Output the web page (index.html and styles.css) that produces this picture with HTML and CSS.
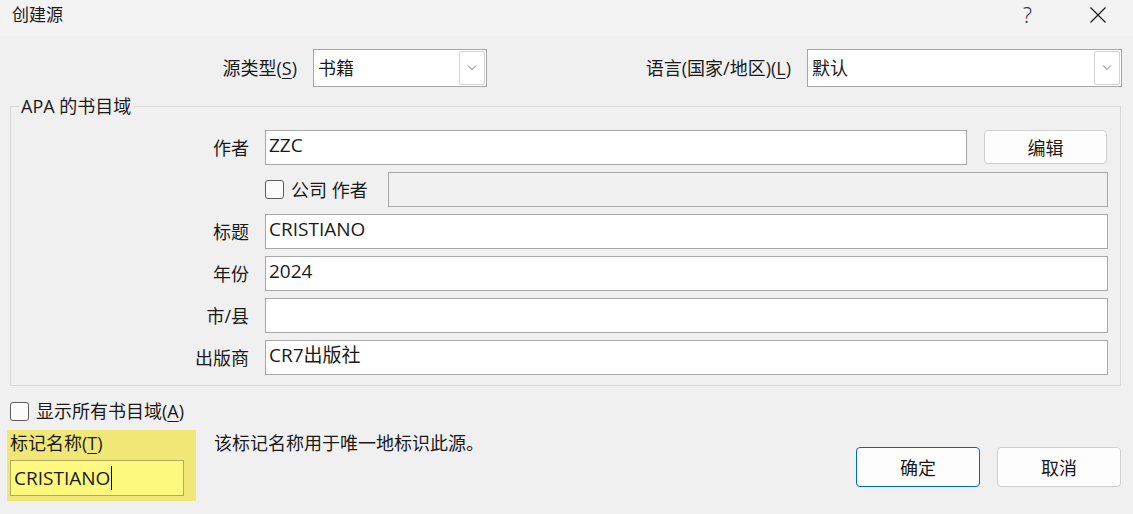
FILE: index.html
```html
<!DOCTYPE html>
<html lang="zh-CN">
<head>
    <meta charset="UTF-8">
    <title>创建源</title>
    <link rel="stylesheet" href="styles.css">
</head>
<body>

<div class="dialog">
    <div class="titlebar">
        <span class="title">创建源</span>
        <div class="title-buttons">
            <span class="help">?</span>
            <svg class="close" width="16" height="16" viewBox="0 0 16 16">
                <path d="M0.5 0.5 L15.5 15.5 M15.5 0.5 L0.5 15.5" stroke="#1a1a1a" stroke-width="1.2" fill="none"/>
            </svg>
        </div>
    </div>

    <div class="top-row">
        <label class="lbl">源类型(<u>S</u>)</label>
        <div class="combo">
            <span class="combo-text">书籍</span>
            <span class="combo-btn">
                <svg width="10" height="6" viewBox="0 0 10 6"><path d="M1 0.5 L5 4.5 L9 0.5" stroke="#707070" stroke-width="1" fill="none"/></svg>
            </span>
        </div>
        <label class="lbl">语言(国家/地区)(<u>L</u>)</label>
        <div class="combo">
            <span class="combo-text">默认</span>
            <span class="combo-btn">
                <svg width="10" height="6" viewBox="0 0 10 6"><path d="M1 0.5 L5 4.5 L9 0.5" stroke="#707070" stroke-width="1" fill="none"/></svg>
            </span>
        </div>
    </div>

    <fieldset class="group">
        <legend>APA 的书目域</legend>
        <div class="fields">
            <label class="lbl">作者</label>
            <div class="line">
                <div class="field grow">ZZC</div>
                <button class="btn edit">编辑</button>
            </div>

            <div></div>
            <div class="line">
                <span class="check"></span>
                <span class="check-text">公司 作者</span>
                <div class="field grow disabled"></div>
            </div>

            <label class="lbl">标题</label>
            <div class="field">CRISTIANO</div>

            <label class="lbl">年份</label>
            <div class="field">2024</div>

            <label class="lbl">市/县</label>
            <div class="field"></div>

            <label class="lbl">出版商</label>
            <div class="field">CR7出版社</div>
        </div>
    </fieldset>

    <div class="show-all">
        <span class="check"></span>
        <span class="check-text">显示所有书目域(<u>A</u>)</span>
    </div>

    <div class="bottom">
        <div class="tag-box">
            <div class="tag-label">标记名称(<u>T</u>)</div>
            <div class="tag-field">CRISTIANO<span class="caret"></span></div>
        </div>
        <div class="tag-hint">该标记名称用于唯一地标识此源。</div>
        <div class="actions">
            <button class="btn primary">确定</button>
            <button class="btn">取消</button>
        </div>
    </div>
</div>

</body>
</html>
```

FILE: styles.css
```css
body {
    margin: 0;
    padding: 0;
    font-family: "Open Sans", "Noto Sans CJK SC", sans-serif;
    font-size: 18px;
    color: #1a1a1a;
    background-color: #f0f0f0;
}

.dialog {
    width: 1133px;
    height: 514px;
    overflow: hidden;
    background-color: #f0f0f0;
}

.titlebar {
    height: 36px;
    background-color: #f3f3f3;
    display: flex;
    justify-content: space-between;
    align-items: flex-start;
}

.title {
    margin-left: 12px;
    line-height: 30px;
    font-size: 17px;
}

.title-buttons {
    display: flex;
    align-items: center;
    height: 30px;
    margin-right: 27px;
}

.help {
    font-family: "Noto Sans", sans-serif;
    font-weight: 300;
    font-size: 21px;
    line-height: 30px;
    color: #333;
    margin-right: 58px;
}

.close {
    display: block;
    margin-top: -1px;
}

.lbl {
    text-align: right;
    white-space: nowrap;
    align-self: center;
    line-height: 24px;
}

u {
    text-underline-offset: 3px;
    text-decoration-thickness: 1px;
}

.top-row {
    display: grid;
    grid-template-columns: 297px 174px 288px 315px;
    column-gap: 16px;
    margin-top: 13px;
    height: 38px;
}

.combo {
    display: flex;
    align-items: stretch;
    background-color: white;
    border: 1px solid #a6a6a6;
    box-sizing: border-box;
    height: 38px;
    padding: 1px;
}

.combo-text {
    flex: 1;
    padding-left: 3px;
    line-height: 34px;
}

.combo-btn {
    width: 24px;
    border: 1px solid #d4d4d4;
    border-radius: 2px;
    display: flex;
    align-items: center;
    justify-content: center;
}

.group {
    margin: 7px 12px 0 10px;
    padding: 0 12px 10px 0;
    border: 1px solid #d9d9d9;
    min-width: 0;
}

.group legend {
    margin-left: 8px;
    padding: 0 2px;
    line-height: 24px;
}

.fields {
    display: grid;
    grid-template-columns: 238px 1fr;
    grid-auto-rows: 35px;
    column-gap: 16px;
    row-gap: 7px;
    padding-top: 12px;
}

.line {
    display: flex;
    align-items: center;
}

.field {
    box-sizing: border-box;
    height: 35px;
    background-color: white;
    border: 1px solid #a8a8a8;
    padding: 0 3px;
    font-size: 19px;
    line-height: 28px;
    white-space: nowrap;
}

.grow {
    flex: 1;
}

.field.disabled {
    background-color: #f0f0f0;
    margin-left: 20px;
}

.btn {
    font-family: inherit;
    font-size: 18px;
    color: #1a1a1a;
    background-color: #fdfdfd;
    border: 1px solid #d0d0d0;
    border-radius: 4px;
    padding: 0;
    width: 124px;
    height: 40px;
}

.btn.edit {
    width: 123px;
    height: 34px;
    margin-left: 17px;
    align-self: flex-start;
    margin-right: 1px;
}

.check {
    box-sizing: border-box;
    width: 19px;
    height: 19px;
    border: 1px solid #5c5c5c;
    border-radius: 3px;
    background-color: #fbfbfb;
    flex: none;
}

.check-text {
    margin-left: 7px;
    line-height: 24px;
    white-space: nowrap;
}

.show-all {
    display: flex;
    align-items: center;
    margin: 13px 0 0 10px;
    height: 24px;
}

.bottom {
    display: flex;
    align-items: flex-start;
    margin-top: 7px;
}

.tag-box {
    margin-left: 7px;
    width: 189px;
    box-sizing: border-box;
    padding: 1px 12px 5px 3px;
    background-color: #f1e777;
}

.tag-label {
    line-height: 24px;
}

.tag-field {
    box-sizing: border-box;
    height: 36px;
    margin-top: 5px;
    background-color: #fff87f;
    border: 1px solid #b3aa5c;
    padding: 0 3px;
    font-size: 19px;
    line-height: 32px;
    display: flex;
    align-items: center;
}

.caret {
    display: inline-block;
    width: 1px;
    height: 24px;
    background-color: #000;
    margin-left: 1px;
}

.tag-hint {
    margin-left: 18px;
    margin-top: 1px;
    line-height: 24px;
    flex: 1;
}

.actions {
    display: flex;
    gap: 17px;
    margin-top: 17px;
    margin-right: 12px;
}

.btn.primary {
    border-color: #0067c0;
}
```
